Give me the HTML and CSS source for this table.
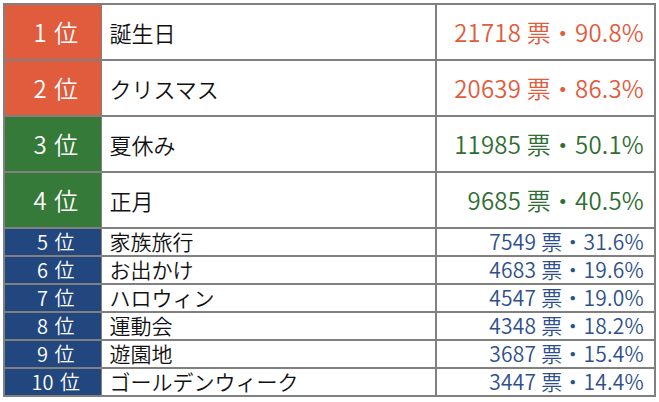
FILE: index.html
```html
<!DOCTYPE html>
<html lang="ja">
<head>
<meta charset="utf-8">
<link rel="stylesheet" href="styles.css">
</head>
<body>
<table class="rank-table">
  <colgroup><col class="c-rank"><col class="c-name"><col class="c-val"></colgroup>
  <tr class="big orange"><td class="rank">1 位</td><td class="name">誕生日</td><td class="val">21718 票・90.8%</td></tr>
  <tr class="big orange"><td class="rank">2 位</td><td class="name">クリスマス</td><td class="val">20639 票・86.3%</td></tr>
  <tr class="big green"><td class="rank">3 位</td><td class="name">夏休み</td><td class="val">11985 票・50.1%</td></tr>
  <tr class="big green"><td class="rank">4 位</td><td class="name">正月</td><td class="val">9685 票・40.5%</td></tr>
  <tr class="small blue"><td class="rank">5 位</td><td class="name">家族旅行</td><td class="val">7549 票・31.6%</td></tr>
  <tr class="small blue"><td class="rank">6 位</td><td class="name">お出かけ</td><td class="val">4683 票・19.6%</td></tr>
  <tr class="small blue"><td class="rank">7 位</td><td class="name">ハロウィン</td><td class="val">4547 票・19.0%</td></tr>
  <tr class="small blue"><td class="rank">8 位</td><td class="name">運動会</td><td class="val">4348 票・18.2%</td></tr>
  <tr class="small blue"><td class="rank">9 位</td><td class="name">遊園地</td><td class="val">3687 票・15.4%</td></tr>
  <tr class="small blue"><td class="rank">10 位</td><td class="name">ゴールデンウィーク</td><td class="val">3447 票・14.4%</td></tr>
</table>
</body>
</html>
```
FILE: styles.css
```css
html, body {
  margin: 0;
  padding: 0;
  background: #ffffff;
}
body {
  padding: 3px 0 0 3px;
  font-family: "Noto Sans CJK JP", "Noto Sans", sans-serif;
  font-weight: 350;
}
.rank-table {
  border-collapse: collapse;
  table-layout: fixed;
  width: 651px;
}
.c-rank { width: 97px; }
.c-name { width: 335px; }
.c-val { width: 219px; }
.rank-table td {
  border: 2px solid #808080;
  padding: 0 0 1px 0;
  white-space: nowrap;
  line-height: 1;
  overflow: visible;
}
.rank {
  text-align: center;
  color: #ffffff;
  padding-left: 6px !important;
  word-spacing: 2px;
}
.name {
  color: #111111;
  padding-left: 8px !important;
}
.val {
  text-align: right;
  padding-right: 10px !important;
  letter-spacing: 0.2px;
}
.big td {
  height: 53px;
  font-size: 22px;
}
.big .rank { font-size: 24px; }
.big .val { font-size: 24px; }
.small td {
  height: 25px;
  font-size: 21px;
}
.small .rank { font-size: 20px; }
.rank-table .rank { border-right-width: 1px; }
.rank-table .name { border-left-width: 1px; }
.orange .rank { background: #e05c3d; }
.orange .val { color: #e05c3d; }
.green .rank { background: #357a38; }
.green .val { color: #2f6e32; }
.blue .rank { background: #22477e; }
.blue .val { color: #2d4f8a; }
```
